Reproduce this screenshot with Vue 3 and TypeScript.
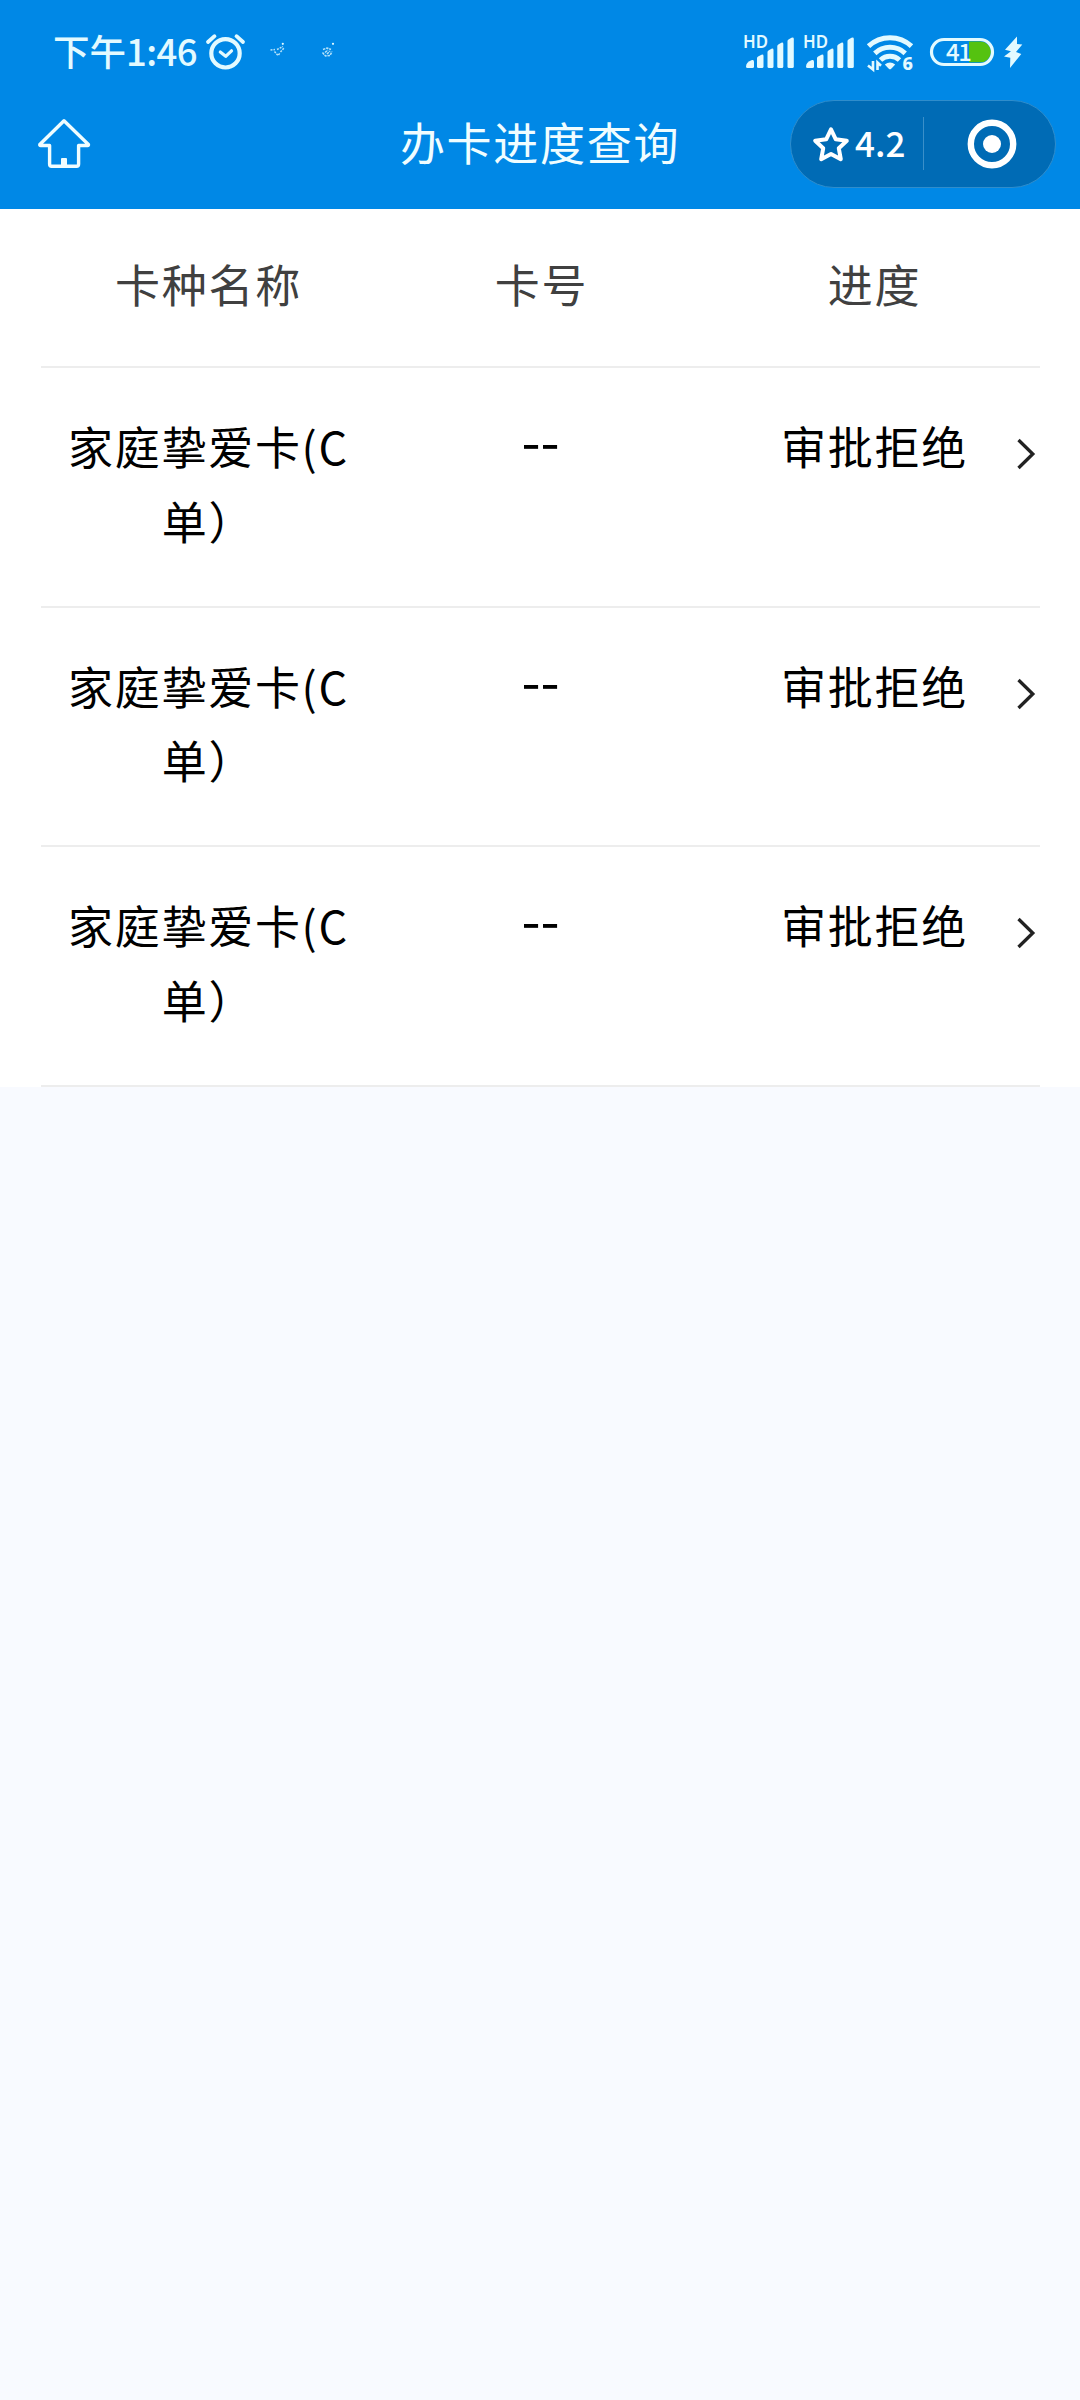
<script setup lang="ts">
interface CardRecord {
  id: number
  name: string
  number: string
  status: string
}

const columns: string[] = ['卡种名称', '卡号', '进度']

const records: CardRecord[] = [1, 2, 3].map((id) => ({
  id,
  name: '家庭挚爱卡(C单）',
  number: '--',
  status: '审批拒绝',
}))
</script>

<template>
  <div class="screen">
    <header class="top">
      <div class="status">
        <span class="time">下午<span class="digits">1:46</span></span>
        <svg class="alarm" viewBox="204 30 44 44" width="44" height="44">
          <g fill="none" stroke="currentColor" stroke-linecap="round" stroke-linejoin="round">
            <circle cx="225.5" cy="53.3" r="14.2" stroke-width="4.2" />
            <path d="M208 42l6.500-5.800M243 42l-6.500-5.800" stroke-width="3.800" />
            <path d="M220.300 52l5.400 4.300 5.800-5.500" stroke-width="3.200" />
          </g>
        </svg>
        <svg class="notice" viewBox="268 30 70 44" width="70" height="44">
          <g fill="none" stroke="currentColor" stroke-width="1.500" opacity="0.8">
            <path d="M270.500 50l4.500-.5M274.500 51.500l3.500 4 2-2.500M277 49.500l6-3M280.500 52l3.500-4" stroke-dasharray="2 1" />
            <path d="M323 49.500l4-1.500 4 1.500M322.500 52.500l3 3.500 4.500-.5 2-4M325 52.500l3-2.500M327 54l3-3" stroke-dasharray="2.500 .8" />
          </g>
          <g fill="currentColor">
            <circle cx="282.800" cy="43.800" r="1.100" />
            <circle cx="333" cy="43.800" r="1.100" />
          </g>
        </svg>
        <div class="spacer"></div>
        <svg v-for="sim in 2" :key="sim" class="signal" viewBox="742 30 54 44" width="54" height="44">
          <text class="hd" x="743" y="48" textLength="25" lengthAdjust="spacingAndGlyphs">HD</text>
          <g fill="currentColor">
            <path d="M746 66.500q0-4.500 6-6.500q2-.5 2 1.500v5q0 1.500-1.500 1.500h-5q-1.500 0-1.500-1.500z" />
            <path d="M757 58q0-1.500 4.500-3.300 2-.7 2 1.300v10.500q0 1.500-1.500 1.500h-3.500q-1.500 0-1.500-1.500z" />
            <path d="M767.500 52q0-1.500 4-3.300 2-.7 2 1.300v16.500q0 1.500-1.500 1.500h-3q-1.500 0-1.500-1.500z" />
            <path d="M777.300 46q0-1.500 4-3.300 2-.7 2 1.300v22.500q0 1.500-1.500 1.500h-3q-1.500 0-1.500-1.500z" />
            <path d="M787.500 41q0-1.500 4-3.300 2.300-.7 2.300 1.300v27.500q0 1.500-1.500 1.500h-3.300q-1.500 0-1.500-1.500z" />
          </g>
        </svg>
        <svg class="wifi" viewBox="864 30 52 44" width="52" height="44">
          <g fill="none" stroke="currentColor" stroke-width="5">
            <path d="M868.500 46.200a31.500 31.500 0 0 1 43 0" />
            <path d="M874.800 53.300a22.400 22.400 0 0 1 30.400 0" />
            <path d="M880.500 60a14 14 0 0 1 19 0" />
          </g>
          <path d="M884.800 64.500q5.200-4 10.400 0l-4 4.300q-1.200 1-2.400 0z" fill="currentColor" />
          <path d="M873 61v8.500l-5-4M877.500 70v-7.500l3.500 3.200" fill="none" stroke="currentColor" stroke-width="2.600" />
          <text class="gen" x="902.500" y="70">6</text>
        </svg>
        <svg class="battery" viewBox="928 30 68 44" width="68" height="44">
          <path d="M969 41.500h11.500a10.400 10.400 0 0 1 0 20.800h-11.500z" fill="#55c210" />
          <rect x="931.500" y="39.500" width="61" height="25" rx="12.500" fill="none" stroke="currentColor" stroke-width="3.200" />
          <text class="charge" x="946" y="61">41</text>
        </svg>
        <svg class="bolt" viewBox="1002 30 22 44" width="22" height="44">
          <path d="M1017 36.500L1005 49.800L1011 51.200L1004 56.500L1010.300 57.700L1010 68L1021.300 54L1016 52L1022.300 44.500L1017 44z" fill="currentColor" />
        </svg>
      </div>
      <nav class="nav">
        <svg class="home" viewBox="36 116 56 56" width="56" height="56">
          <g fill="none" stroke="currentColor" stroke-width="3.400" stroke-linejoin="round">
            <path d="M64 120.700L39.800 144.500q-.3 1 .8 1h9v18.500q0 2.200 2 2.200h25q2 0 2-2.200v-18.500h9q1.200 0 .8-1z" />
          </g>
          <rect x="61" y="158" width="6" height="9" rx="1" fill="currentColor" />
        </svg>
        <h1 class="title">办卡进度查询</h1>
        <div class="capsule">
          <div class="rating">
            <svg viewBox="811 124 40 40" width="40" height="40">
              <path d="M831 129.300l4.800 10 11 1.400-8 7.600 2 10.900-9.800-5.300-9.800 5.300 2-10.900-8-7.600 11-1.400z" fill="none" stroke="currentColor" stroke-width="4" stroke-linejoin="round" />
            </svg>
            <span>4.2</span>
          </div>
          <div class="close">
            <svg viewBox="0 0 50 50" width="50" height="50">
              <circle cx="25" cy="25" r="21.200" fill="none" stroke="currentColor" stroke-width="6.400" />
              <circle cx="25" cy="25" r="9" fill="currentColor" />
            </svg>
          </div>
        </div>
      </nav>
    </header>

    <main class="panel">
      <div class="row head">
        <div v-for="column in columns" :key="column" class="cell">{{ column }}</div>
      </div>
      <div v-for="record in records" :key="record.id" class="row record">
        <div class="cell">{{ record.name }}</div>
        <div class="cell number">{{ record.number }}</div>
        <div class="cell">{{ record.status }}</div>
        <svg class="chevron" viewBox="0 0 20 32" width="20" height="32">
          <path d="M2.500 2L16.800 16 2.500 30" fill="none" stroke="currentColor" stroke-width="3.300" />
        </svg>
      </div>
    </main>
  </div>
</template>

<style>
body {
  background: #f8faff;
}
</style>

<style scoped>
.screen {
  width: 1080px;
  min-height: 2400px;
  background: #f8faff;
  font-family: 'Noto Sans CJK SC', sans-serif;
  color: #000;
}

.top {
  height: 209px;
  background: #0088e6;
  color: #f0fdff;
}

.status {
  display: flex;
  align-items: flex-start;
  height: 80px;
  padding: 30px 56px 0 53px;
  box-sizing: border-box;
  color: #e3faff;
}

.time {
  width: 151px;
  font-size: 36.5px;
  font-weight: 500;
  line-height: 41px;
  white-space: nowrap;
}

.digits {
  letter-spacing: -0.6px;
}

.notice {
  margin-left: 20px;
}

.spacer {
  flex: 1;
}

.signal {
  margin-right: 6px;
}

.wifi {
  margin-left: 2px;
}

.battery {
  margin: 0 6px 0 12px;
}

.hd {
  font-family: 'Noto Sans', sans-serif;
  font-size: 17px;
  font-weight: 600;
  fill: currentColor;
}

.gen {
  font-family: 'Noto Sans', sans-serif;
  font-size: 18px;
  font-weight: 800;
  fill: currentColor;
}

.charge {
  font-size: 24px;
  font-weight: 500;
  letter-spacing: -1.4px;
  fill: currentColor;
}

.nav {
  display: grid;
  grid-template-columns: 266px 1fr 266px;
  align-items: center;
  height: 127px;
  padding: 0 24px 0 36px;
}

.title {
  margin: 0;
  padding-right: 12px;
  font-size: 45px;
  font-weight: 400;
  letter-spacing: 1.7px;
  line-height: 60px;
  padding-bottom: 3px;
  text-align: center;
}

.capsule {
  display: flex;
  align-items: center;
  width: 266px;
  height: 88px;
  box-sizing: border-box;
  border: 1px solid #2f8dcc;
  border-radius: 44px;
  background: #006bb5;
  color: #fff;
}

.rating {
  display: flex;
  align-items: center;
  width: 133px;
  height: 53px;
  padding-left: 20px;
  box-sizing: border-box;
  border-right: 1px solid #3a8fc9;
  font-size: 35px;
  font-weight: 500;
  line-height: 50px;
}

.rating span {
  margin-left: 4px;
  padding-bottom: 4px;
}

.close {
  display: flex;
  flex: 1;
  justify-content: center;
  padding-left: 5px;
}

.panel {
  height: 878px;
  padding: 0 40px 0 41px;
  background: #fff;
}

.row {
  position: relative;
  display: flex;
  box-sizing: border-box;
  border-bottom: 2px solid #ededed;
  font-size: 45px;
  letter-spacing: 1.7px;
  line-height: 74.5px;
  text-align: center;
}

.head {
  height: 159px;
  padding-top: 38px;
  color: #404040;
}

.record {
  height: 239.67px;
  padding-top: 41px;
}

.cell {
  flex: 1;
  min-width: 0;
  padding: 0 19px 0 21px;
}

.number {
  padding: 0 20px;
  font-size: 55px;
  line-height: 58px;
  letter-spacing: 0;
}

.chevron {
  position: absolute;
  top: 70px;
  right: 4px;
  color: #222;
}
</style>
